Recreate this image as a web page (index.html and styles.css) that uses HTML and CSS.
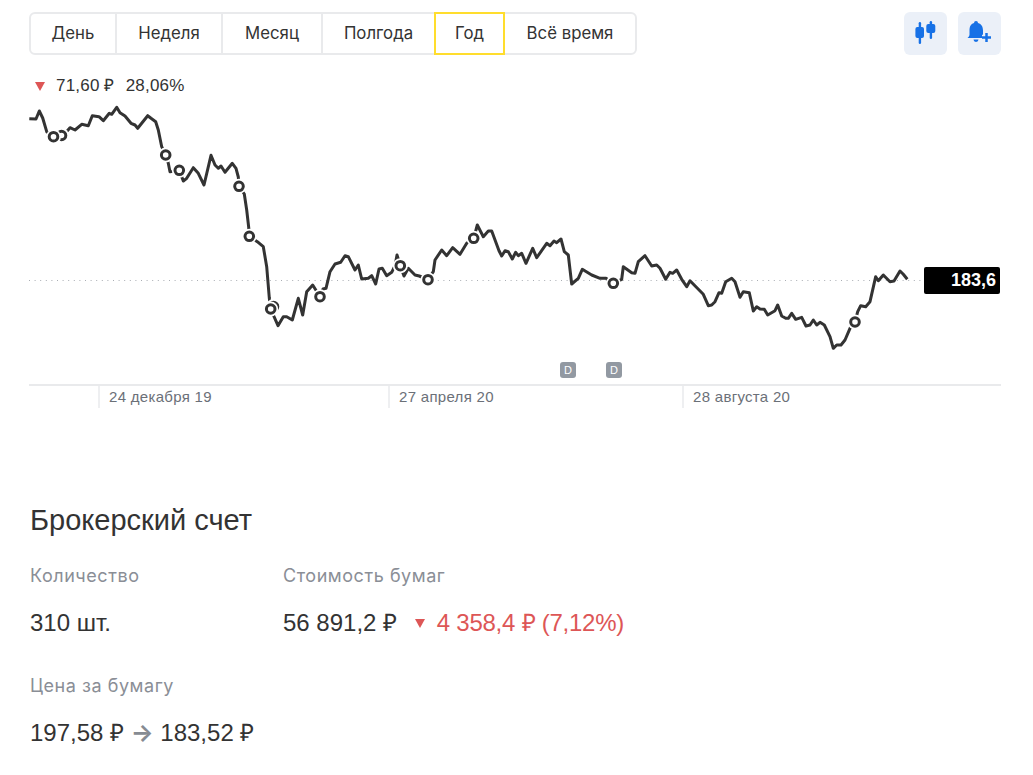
FILE: index.html
```html
<!DOCTYPE html>
<html lang="en">
  <head>
    <meta charset="UTF-8" />
    <title>Брокерский счет</title>
    <link rel="stylesheet" href="styles.css">
  </head>
  <body>
    <div class="toolbar">
      <div class="tabs">
        <div class="tab">День</div>
        <div class="tab">Неделя</div>
        <div class="tab">Месяц</div>
        <div class="tab">Полгода</div>
        <div class="tab active">Год</div>
        <div class="tab">Всё время</div>
      </div>
      <div class="tools">
        <div class="tool">
          <svg width="42" height="42" viewBox="0 0 42 42">
            <g fill="#1771e6">
              <rect x="14.700" y="10" width="2.400" height="22" rx="1.200"/>
              <rect x="11.400" y="15" width="8.600" height="11" rx="2"/>
              <rect x="25.700" y="9" width="2.400" height="18" rx="1.200"/>
              <rect x="22.300" y="12" width="9" height="9" rx="2"/>
            </g>
          </svg>
        </div>
        <div class="tool">
          <svg width="42" height="42" viewBox="0 0 42 42">
            <path fill="#1771e6" d="M16 11a2 2 0 0 1 4 0c3.600 1 5 4 5 7.500v4c0 1.500 1 2.500 2 3.500H9.500c1-1 2-2 2-3.500v-4c0-3.500 1-6.500 4.500-7.500z"/>
            <path fill="#1771e6" d="M15.500 27.500h5a2.500 2.500 0 0 1-5 0z"/>
            <path fill="none" stroke="#ebf0f8" stroke-width="5.500" d="M24 25.500h9M28.500 21v9"/>
            <path fill="none" stroke="#1771e6" stroke-width="2.500" d="M24 25.500h9M28.500 21v9"/>
          </svg>
        </div>
      </div>
    </div>

    <div class="change">
      <span class="down"></span>
      <span>71,60 ₽</span>
      <span>28,06%</span>
    </div>

    <div class="chart">
      <svg class="plot" width="972" height="284" viewBox="29 100 972 284">
        <defs>
          <g id="deal">
            <circle r="7.500" fill="#fff"/>
            <circle r="4.300" fill="#fff" stroke="#333" stroke-width="3"/>
          </g>
        </defs>
        <line x1="29" y1="280.500" x2="924" y2="280.500" stroke="#a9adb3" stroke-dasharray="1 4.600"/>
        <polyline class="price" points="29.300,118.700 36,119 39.300,111 42.700,118 46.700,131.700 53.500,136.700 63,135.700 70,127.700 75,130 81.700,124.300 88.300,125.700 92.300,115.700 99,116.700 103.300,120.700 109.300,113.300 111.700,114.300 116.700,107.300 120,112.700 125,116 131,123.300 135,125 137.700,128.300 141.700,123.300 147.700,115.700 151,118.300 155.700,121.700 158.300,130 161.700,146.700 165.700,155 168.300,163.300 170,171.700 179.300,170.300 183.300,181 186.700,178.300 193.300,167.700 198.300,173.300 204,185 211,155.300 215,165 218.300,168.300 221,166 225,172.300 232.300,163.300 236,168.300 238.300,177 239,186.300 244.300,194 246.700,210 248.700,227.300 249.300,236.300 257.300,241.700 263.300,246.700 266.700,266.700 269.300,298 270.700,309 278,325.700 283.300,316.700 286.700,316.700 292.300,320 298.300,298.300 302.700,315 306.700,291.700 312.700,285 320,296.700 323,289 326,288.300 330,271.700 335,264 340.700,262.300 345,255.700 348.300,256.700 355,270 358.300,265 361.700,279 368.300,278.300 371.700,275.700 375.700,284 379,269 382.300,268.300 386.700,275.700 391.700,272.300 395,265.700 397,255 400.300,265.700 404,276 408.300,268.300 415,275 419.300,276 428,279.700 433.300,271.700 435,260 441.700,250 446.700,255.700 452.700,247.700 460,254.300 466.700,243.300 473.700,238.300 477.300,225 483.300,236.700 488.300,231 491.700,231 499,250.700 501.700,256 505,250.700 508.300,251.700 512.300,259 515.700,252.300 518.300,255.700 521.700,253.300 526,263.300 532.700,248.300 536.700,257.700 546.700,243.300 550,245.700 554,241 556.700,242.700 561,239 564.300,251.700 568.300,255 571.700,284 578.300,278.300 582.300,269.300 591.700,275 600,278.300 606,278.300 613.300,283.300 621.700,279.300 623.300,266.700 631.700,272.700 635,273.300 638.300,261.700 645,255.700 651.700,266 656.700,265 660,268.300 665.700,279.300 670,272.300 672.700,273.300 676.700,270 681.700,279.300 686.700,286.700 690,280.700 703.300,294.300 708.300,305.700 711.700,305 715,301.700 719,292.700 721.700,293.300 725.700,281.700 731.700,278.300 735,281.700 740,297.300 743.300,291.700 749.300,292.700 753.300,311 756.700,306.700 760,309 764.300,309.300 767.700,315 775,310.700 777.700,305 781.700,316 785.700,318.300 788.300,318.300 791.700,313.300 795.700,319.300 801.700,317.300 806,326 810,325 813.300,320 816.700,325 820,322.300 824.300,325 830,336.700 833.300,348.300 836.700,345 841,345 845,340 850,328.300 855,322 857.700,311.700 860.700,305.700 865.700,306.700 870,301.700 875.700,276.700 878.300,280.700 883.300,275 890,281.700 894,281 900,271 903.300,274.300 907.300,279.300"/>
        <use href="#deal" x="61.500" y="135.500"/>
        <use href="#deal" x="53.500" y="136.700"/>
        <use href="#deal" x="165.700" y="155"/>
        <use href="#deal" x="179.300" y="170.300"/>
        <use href="#deal" x="239" y="186.300"/>
        <use href="#deal" x="249.300" y="236.300"/>
        <use href="#deal" x="273.500" y="306.500"/>
        <use href="#deal" x="270.700" y="309"/>
        <use href="#deal" x="320" y="296.700"/>
        <use href="#deal" x="400.300" y="265.700"/>
        <use href="#deal" x="428" y="279.700"/>
        <use href="#deal" x="473.700" y="238.300"/>
        <use href="#deal" x="613.300" y="283.300"/>
        <use href="#deal" x="855" y="322"/>
      </svg>
      <div class="last-price">183,6</div>
      <div class="dividend first">D</div>
      <div class="dividend second">D</div>
    </div>
    <div class="axis">
      <div></div>
      <div class="tick">24 декабря 19</div>
      <div class="tick">27 апреля 20</div>
      <div class="tick">28 августа 20</div>
    </div>

    <h2>Брокерский счет</h2>
    <div class="stats">
      <div class="stat">
        <div class="label">Количество</div>
        <div class="value">310 шт.</div>
      </div>
      <div class="stat">
        <div class="label">Стоимость бумаг</div>
        <div class="value">56 891,2 ₽
          <span class="loss"><span class="down big"></span>4 358,4 ₽ (7,12%)</span>
        </div>
      </div>
      <div class="stat">
        <div class="label">Цена за бумагу</div>
        <div class="value">197,58 ₽ <span class="arrow">→</span> 183,52 ₽</div>
      </div>
    </div>
  </body>
</html>
```

FILE: styles.css
```css
body {
  margin: 0;
  padding: 12px 32px 0 29px;
  background: #fff;
  color: #333;
  font-family: "Liberation Sans", Arial, sans-serif;
  height: 763px;
  overflow: hidden;
}

.toolbar {
  display: flex;
  justify-content: space-between;
  height: 43px;
}

.tabs {
  display: grid;
  grid-template-columns: 84px 106px 100px 113px 71px 130px;
  box-sizing: border-box;
  width: 608px;
  border: 2px solid #e9eaec;
  border-radius: 6px;
}

.tab {
  display: flex;
  align-items: center;
  justify-content: center;
  padding-bottom: 2px;
  font-family: Inter, "Liberation Sans", sans-serif;
  font-size: 16.800px;
  border-left: 2px solid #e9eaec;
}

.tab:first-child {
  border-left: none;
}

.tab.active {
  border: 2px solid #ffdd2d;
  margin: -2px 0;
}

.tab.active + .tab {
  border-left: none;
}

.tools {
  display: flex;
  gap: 11px;
}

.tool {
  width: 43px;
  height: 43px;
  background: #ebf0f8;
  border-radius: 6px;
}

.tool svg {
  display: block;
}

.change {
  display: flex;
  align-items: center;
  gap: 11px;
  height: 20px;
  margin: 21px 0 4px 6px;
  font-size: 17px;
  line-height: 20px;
  letter-spacing: 0.200px;
}

.down {
  display: inline-block;
  width: 0;
  height: 0;
  border-left: 5px solid transparent;
  border-right: 5px solid transparent;
  border-top: 9px solid #dd5656;
}

.chart {
  position: relative;
  height: 284px;
}

.plot {
  display: block;
}

.price {
  fill: none;
  stroke: #333;
  stroke-width: 3;
  stroke-linejoin: round;
}

.last-price {
  position: absolute;
  left: 895px;
  top: 167px;
  width: 76px;
  height: 27px;
  box-sizing: border-box;
  padding-right: 4px;
  background: #000;
  border-radius: 2px;
  color: #fff;
  font-size: 18px;
  font-weight: bold;
  line-height: 27px;
  text-align: right;
}

.dividend {
  position: absolute;
  top: 262px;
  width: 16px;
  height: 16px;
  background: #9299a2;
  border-radius: 3px;
  color: #fff;
  font-size: 11px;
  line-height: 16px;
  text-align: center;
}

.dividend.first {
  left: 531px;
}

.dividend.second {
  left: 577px;
}

.axis {
  display: grid;
  grid-template-columns: 69px 290px 294px 1fr;
  border-top: 2px solid #e9eaec;
  height: 20px;
}

.tick {
  border-left: 2px solid #eeeff1;
  padding-left: 9px;
  color: #6b7078;
  font-size: 15px;
  line-height: 22px;
  letter-spacing: 0.300px;
}

h2 {
  margin: 96px 0 0 1px;
  font-size: 29px;
  font-weight: normal;
  line-height: 36px;
}

.stats {
  display: grid;
  grid-template-columns: 253px 1fr;
  row-gap: 35px;
  margin: 26px 0 0 1px;
}

.stat {
  display: flex;
  flex-direction: column;
  gap: 19px;
}

.label {
  color: #8a8e96;
  font-family: Inter, "Liberation Sans", sans-serif;
  font-size: 18px;
  line-height: 24px;
  letter-spacing: 0.550px;
}

.value {
  font-size: 24px;
  line-height: 32px;
}

.loss {
  margin-left: 11px;
  color: #dd5656;
  letter-spacing: -0.250px;
}

.down.big {
  margin: 0 12px 3px 0;
  vertical-align: middle;
}

.arrow {
  color: #868b92;
  font-family: Inter, sans-serif;
  font-weight: bold;
}
```
